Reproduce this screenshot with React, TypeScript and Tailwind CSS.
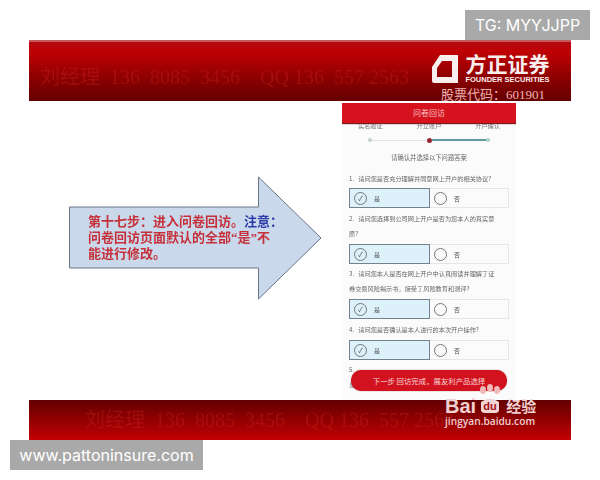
function Contact({ className }: { className: string }) {
  return (
    <div className={`whitespace-pre text-[20px] leading-none text-[#d92a2a]/30 blur-[0.4px] font-['Liberation_Serif','Noto_Sans_CJK_SC',serif] ${className}`}>
      刘经理  136  8085  3456    QQ 136  557 2563
    </div>
  );
}

function Options() {
  return (
    <div className="flex h-[20px] w-[160px] text-[6px] text-[#555]">
      <div className="flex w-[81px] items-center gap-[7px] border border-[#75818f] bg-[#ddf1fb] pl-[4px]">
        <span className="flex h-[13px] w-[13px] items-center justify-center rounded-full border border-[#777] text-[7px] leading-none">✓</span>
        <span>是</span>
      </div>
      <div className="flex flex-1 items-center gap-[7px] border border-l-0 border-[#e6e6e6] bg-[#fbfbfb] pl-[4px]">
        <span className="h-[13px] w-[13px] rounded-full border border-[#777]" />
        <span>否</span>
      </div>
    </div>
  );
}

function Question({ lines, className }: { lines: string[]; className: string }) {
  return (
    <div className={`text-[6.2px] leading-[15px] text-[#666] ${className}`}>
      {lines.map((line) => (
        <div key={line} className="whitespace-pre">{line}</div>
      ))}
    </div>
  );
}

function PhonePanel() {
  return (
    <div className="relative mt-[2px] h-[297px] w-[174px] overflow-hidden bg-[#fbfbfb] font-['Noto_Sans_CJK_SC',sans-serif]">
      <div className="relative z-10 flex h-[20px] items-center justify-center bg-[#d6121e] text-[8px] text-[#f6c3c3] shadow-[0_1px_1px_#7a1a1a]">
        问卷回访
      </div>
      <div className="blur-[0.35px]">
        <div className="-mt-[3px] flex h-[12px] justify-between px-[16px] text-[6.2px] leading-[12px] text-[#777]">
          <span>实名验证</span>
          <span>开立账户</span>
          <span>开户确认</span>
        </div>
        <div className="ml-[26px] mt-[5px] flex h-[6px] w-[122px] items-center">
          <span className="h-[4px] w-[4px] rounded-full bg-[#c4cfcf]" />
          <span className="h-px w-[55px] bg-[#e4e4e4]" />
          <span className="h-[5px] w-[5px] rounded-full bg-[#962532]" />
          <span className="h-[2px] flex-1 bg-[#5f9a9c]" />
          <span className="h-[4px] w-[4px] rounded-full bg-[#a9cfca]" />
        </div>
        <div className="mt-[9px] text-center text-[6.3px] leading-[12px] text-[#666]">请确认并选择以下问题答案</div>
        <div className="pl-[7px]">
          <Question className="mt-[7px]" lines={["1.   请问您是否充分理解并同意网上开户的相关协议?"]} />
          <div className="mt-[2px]"><Options /></div>
          <Question className="mt-[3px]" lines={["2.   请问您选择到公司网上开户是否为您本人的真实意", "愿?"]} />
          <div className="mt-[3px]"><Options /></div>
          <Question className="mt-[2px]" lines={["3.   请问您本人是否在网上开户中认真阅读并理解了证", "券交易风险揭示书\uFF0C接受了风险教育和测评?"]} />
          <div className="mt-[3px]"><Options /></div>
          <Question className="mt-[3px]" lines={["4.   请问您是否确认是本人进行的本次开户操作?"]} />
          <div className="mt-[3px]"><Options /></div>
          <div className="mt-[2px] text-[6px] leading-[15px] text-[#666]">5.</div>
          <div className="text-[6px] leading-[15px] text-[#666]">息</div>
        </div>
      </div>
      <div className="absolute left-[9px] top-[267px] flex h-[21px] w-[156px] items-center justify-center rounded-full bg-[#d2121f] text-[7.4px] text-[#f8d5d5] shadow-[0_0_1px_#7a1a1a]">
        {"下一步 回访完成\uFF0C展友利产品选择"}
      </div>
    </div>
  );
}

function StepArrow() {
  return (
    <div className="relative ml-[69px] mt-[75px] h-[124px] w-[253px]">
      <svg width="253" height="124" viewBox="0 0 253 124" className="absolute left-0 top-0">
        <polygon
          points="0.5,31 189.5,31 189.5,1 252,62 189.5,123 189.5,92 0.5,92"
          fill="#c9d8ea"
          stroke="#6a7686"
          strokeWidth="1"
        />
      </svg>
      <p className="absolute left-[19px] top-[38px] w-[205px] text-[13px] font-bold leading-[16px] text-[#c5303a] blur-[0.3px] font-['Liberation_Serif','Noto_Sans_CJK_SC',serif]">
        {"第十七步\uFF1A进入问卷回访。"}<span className="text-[#2a3aa8]">{"注意\uFF1A"}</span>
        <br />
        {"问卷回访页面默认的全部\u201C是\u201D不"}
        <br />
        能进行修改。
      </p>
    </div>
  );
}

function FounderLogo() {
  return (
    <div className="flex items-center gap-[7px]">
      <svg width="26" height="28" viewBox="0 0 26 28">
        <path
          fillRule="evenodd"
          fill="#f8eeee"
          d="M8 0H26V28H2Q0 28 0 26V12ZM10 6 5 13V22H20V6Z"
        />
      </svg>
      <div className="flex w-[85px] flex-col items-center text-[#f8eeee]">
        <div className="text-[21px] font-bold leading-[21px] font-['Noto_Sans_CJK_SC',sans-serif]">方正证券</div>
        <div className="mt-[2px] whitespace-nowrap text-[7.5px] font-bold leading-[8px] font-['Liberation_Sans',sans-serif]">FOUNDER SECURITIES</div>
      </div>
    </div>
  );
}

function BaiduMark() {
  return (
    <div className="absolute left-[445px] top-[-16px] flex w-[96px] flex-col text-[#f0d0d0]">
      <div className="flex h-[30px] items-end">
        <span className="text-[20px] font-bold leading-[16px] font-['Liberation_Sans',sans-serif]">Bai</span>
        <svg width="24" height="30" viewBox="0 0 24 30" className="ml-[2px]">
          <g fill="#f0b8b8">
            <ellipse cx="5" cy="6" rx="3" ry="4" />
            <ellipse cx="12" cy="4" rx="3" ry="4" />
            <ellipse cx="19" cy="6" rx="3" ry="4" />
          </g>
          <path d="M3 18Q12 11 21 18V26Q21 29 17 29H7Q3 29 3 26Z" fill="#f0d5d5" />
          <text x="12" y="26" textAnchor="middle" fontSize="11" fontWeight="700" fill="#a8101a" fontFamily="Liberation Sans">du</text>
        </svg>
        <span className="ml-[4px] text-[15px] font-bold leading-[16px] font-['Noto_Sans_CJK_SC',sans-serif]">经验</span>
      </div>
      <span className="whitespace-nowrap text-[10.2px] font-semibold leading-[14px] font-['Open_Sans',sans-serif]">jingyan.baidu.com</span>
    </div>
  );
}

export default function App() {
  return (
    <div className="relative h-[480px] w-[600px] overflow-hidden bg-white pt-[40px]">
      <header className="mx-[29px] flex h-[61px] w-[542px] border-t-2 border-[#c85a5e] bg-gradient-to-b from-[#b00a10] via-[#c00004] via-15% to-[#640000]">
        <Contact className="ml-[11px] mt-[25px] w-[392px]" />
        <div className="flex flex-col items-center">
          <div className="mt-[11px]">
            <FounderLogo />
          </div>
          <div className="mt-[3px] ml-[4px] whitespace-nowrap text-[13px] leading-[16px] text-[#f2b4b4] font-['Liberation_Serif','Noto_Sans_CJK_SC',serif]">
            {"股票代码\uFF1A601901"}
          </div>
        </div>
      </header>

      <main className="flex h-[299px]">
        <StepArrow />
        <div className="ml-[20px]">
          <PhonePanel />
        </div>
      </main>

      <footer className="relative mx-[29px] flex h-[40px] w-[542px] bg-gradient-to-b from-[#640000] to-[#c20004]">
        <Contact className="ml-[56px] mt-[10px]" />
        <div className="absolute left-[-29px] top-0 h-full w-[600px]">
          <BaiduMark />
        </div>
      </footer>

      <div className="absolute right-[10px] top-[10px] flex h-[30px] w-[125px] items-center justify-center bg-[#a9a9a9] text-[16px] text-white font-['Inter',sans-serif]">
        TG: MYYJJPP
      </div>
      <div className="absolute left-[10px] top-[440px] flex h-[30px] w-[193px] items-center justify-center bg-[#a9a9a9] text-[16px] text-white font-['Inter',sans-serif]">
        www.pattoninsure.com
      </div>
    </div>
  );
}
